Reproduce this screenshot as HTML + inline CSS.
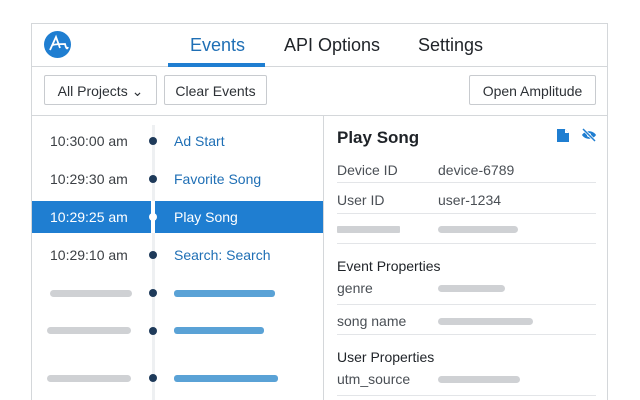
<!DOCTYPE html><html style="overflow:hidden;height:400px"><head><style>
body{margin:0;width:640px;height:400px;background:#fff;position:relative;overflow:hidden;font-family:"Liberation Sans",sans-serif;}
.a{position:absolute}
.t{position:absolute;white-space:nowrap}
.bar{position:absolute;height:7px;border-radius:4px;background:#cfd1d4}
.bl{position:absolute;height:7px;border-radius:3px;background:#5aa2d6}
.ln{position:absolute;left:337px;width:259px;height:1px;background:#e3e5e8}
.lab{position:absolute;left:337px;font-size:14px;color:#4a4f55}
.val{position:absolute;left:438px;font-size:14px;color:#4a4f55}
.time{position:absolute;left:50px;font-size:14px;color:#3c4045}
.ev{position:absolute;left:174px;font-size:14px;color:#1f6fb5}
.dot{position:absolute;left:149px;width:8px;height:8px;border-radius:50%;background:#1e3a5a}
.btn{position:absolute;top:75px;height:30px;border:1px solid #c8cbcf;border-radius:2px;font-size:14px;color:#2d3136;line-height:30px;box-sizing:border-box;text-align:center}
</style></head><body>
<div class="a" style="left:31px;top:23px;width:577px;height:390px;border:1px solid #d4d7da;box-sizing:border-box"></div>
<div class="a" style="left:32px;top:66px;width:576px;height:1px;background:#d4d7da"></div>
<div class="a" style="left:32px;top:115px;width:576px;height:1px;background:#d4d7da"></div>
<div class="a" style="left:323px;top:116px;width:1px;height:290px;background:#d4d7da"></div>
<svg class="a" style="left:44px;top:31px" width="27" height="27" viewBox="0 0 27 27"><circle cx="13.5" cy="13.5" r="13.5" fill="#1f7ed1"/><path d="M6 19 L12 6 L16 17 M8.5 14 C12 13 15 13 21 13 C22 17 23 19 24 16" stroke="#fff" stroke-width="1.8" fill="none"/></svg>
<div class="t" style="left:190px;top:35px;font-size:18px;color:#1f6fb5">Events</div>
<div class="a" style="left:168px;top:63px;width:97px;height:4px;background:#1f7ed1"></div>
<div class="t" style="left:284px;top:35px;font-size:18px;color:#1f2328">API Options</div>
<div class="t" style="left:418px;top:35px;font-size:18px;color:#1f2328">Settings</div>
<div class="btn" style="left:44px;width:113px">All Projects &#8964;</div>
<div class="btn" style="left:164px;width:103px">Clear Events</div>
<div class="btn" style="left:469px;width:127px">Open Amplitude</div>
<div class="a" style="left:152px;top:125px;width:3px;height:275px;background:#eef0f2"></div>
<div class="a" style="left:32px;top:201px;width:291px;height:32px;background:#1f7ed1"></div>
<div class="a" style="left:151px;top:201px;width:4px;height:32px;background:#fff"></div>
<div class="time" style="top:133px">10:30:00 am</div><div class="dot" style="top:137px"></div><div class="ev" style="top:133px">Ad Start</div>
<div class="time" style="top:171px">10:29:30 am</div><div class="dot" style="top:175px"></div><div class="ev" style="top:171px">Favorite Song</div>
<div class="time" style="top:209px;color:#fff">10:29:25 am</div><div class="dot" style="top:213px;background:#fff"></div><div class="ev" style="top:209px;color:#fff">Play Song</div>
<div class="time" style="top:247px">10:29:10 am</div><div class="dot" style="top:251px"></div><div class="ev" style="top:247px">Search: Search</div>
<div class="bar" style="left:50px;top:290px;width:82px"></div><div class="dot" style="top:289px"></div><div class="bl" style="left:174px;top:290px;width:101px"></div>
<div class="bar" style="left:47px;top:327px;width:84px"></div><div class="dot" style="top:327px"></div><div class="bl" style="left:174px;top:327px;width:90px"></div>
<div class="bar" style="left:47px;top:375px;width:84px"></div><div class="dot" style="top:374px"></div><div class="bl" style="left:174px;top:375px;width:104px"></div>
<div class="t" style="left:337px;top:128px;font-size:17px;font-weight:bold;color:#1f2328">Play Song</div>
<svg class="a" style="left:556px;top:128px" width="14" height="15"><path d="M1 1h8l4 4v9H1z" fill="#1f7ed1"/><path d="M9 1v4h4" fill="#fff"/></svg>
<svg class="a" style="left:581px;top:128px" width="16" height="14"><path d="M1 7C4 2 12 2 15 7C12 12 4 12 1 7z" fill="#1f7ed1"/><circle cx="8" cy="7" r="2" fill="#fff"/><path d="M2 1L14 13" stroke="#fff" stroke-width="3"/><path d="M2 1L14 13" stroke="#1f7ed1" stroke-width="1.5"/></svg>
<div class="lab" style="top:162px">Device ID</div><div class="val" style="top:162px">device-6789</div><div class="ln" style="top:182px"></div>
<div class="lab" style="top:192px">User ID</div><div class="val" style="top:192px">user-1234</div><div class="ln" style="top:213px"></div>
<div class="bar" style="left:337px;top:226px;width:63px;border-radius:1px"></div><div class="bar" style="left:438px;top:226px;width:80px"></div><div class="ln" style="top:243px"></div>
<div class="t" style="left:337px;top:258px;font-size:14px;color:#1f2328">Event Properties</div>
<div class="lab" style="top:280px">genre</div><div class="bar" style="left:438px;top:285px;width:67px"></div><div class="ln" style="top:304px"></div>
<div class="lab" style="top:313px">song name</div><div class="bar" style="left:438px;top:318px;width:95px"></div><div class="ln" style="top:334px"></div>
<div class="t" style="left:337px;top:349px;font-size:14px;color:#1f2328">User Properties</div>
<div class="lab" style="top:371px">utm_source</div><div class="bar" style="left:438px;top:376px;width:82px"></div><div class="ln" style="top:395px"></div>
</body></html>
